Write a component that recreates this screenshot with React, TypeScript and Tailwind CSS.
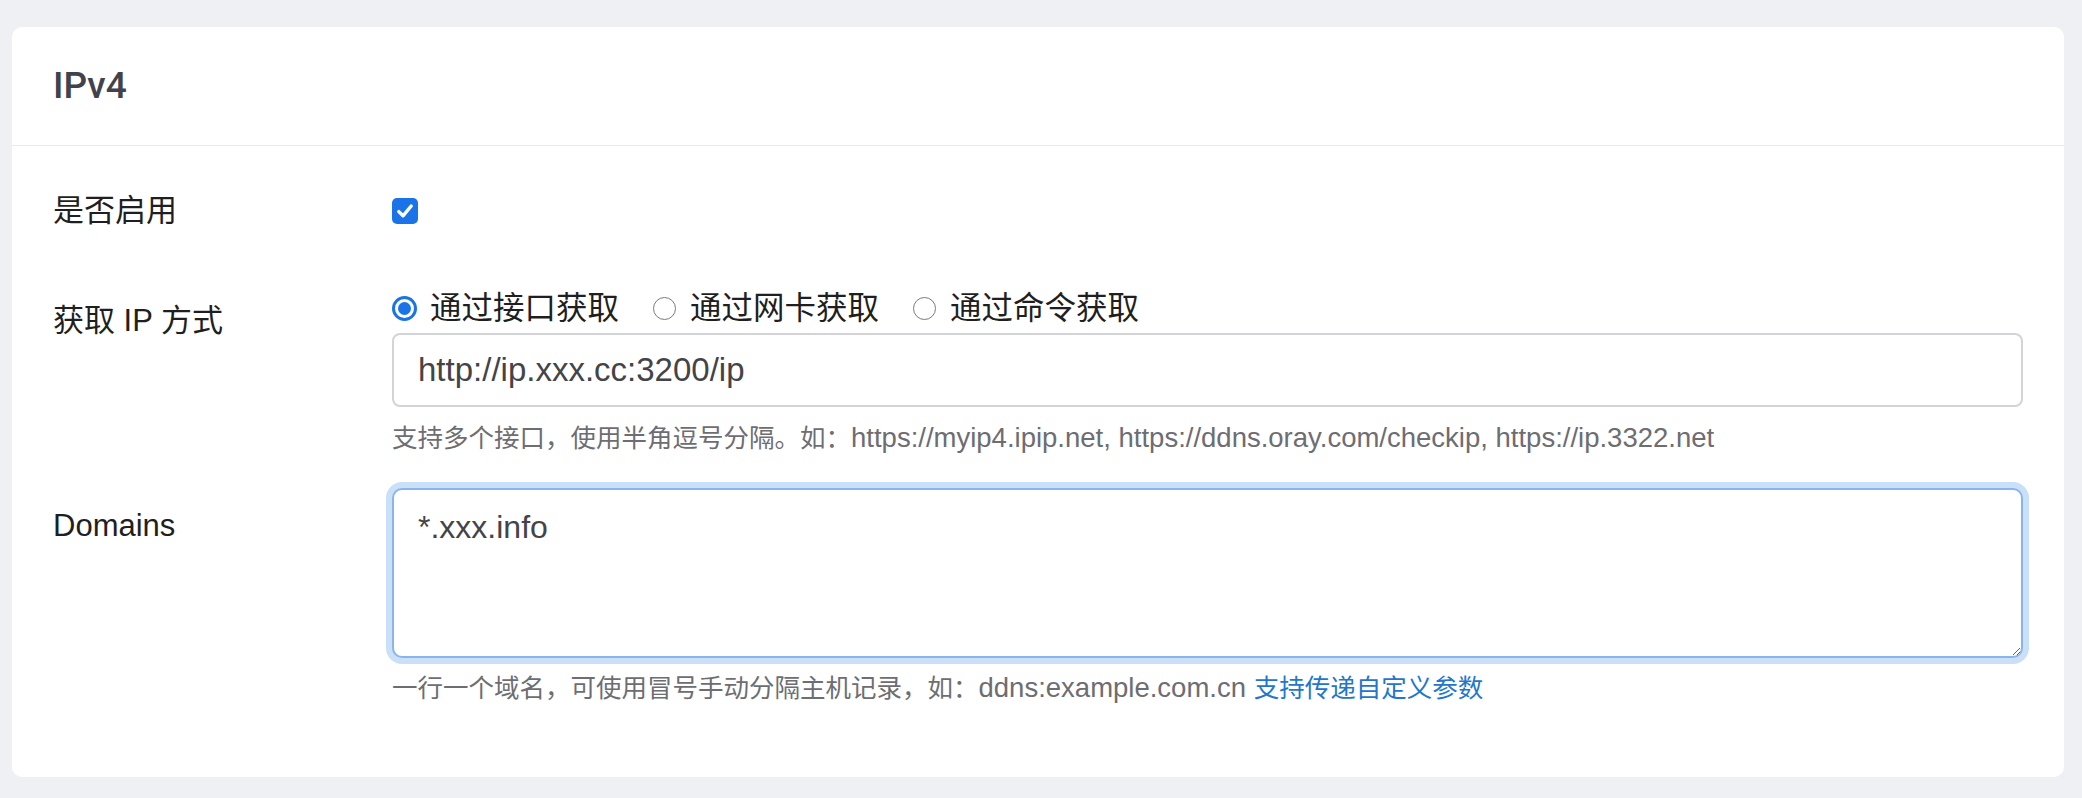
import React from "react";

function Checkbox() {
  return (
    <div className="w-[26px] h-[26px] rounded-[5px] bg-[#1b73e8] flex items-center justify-center">
      <svg width="26" height="26" viewBox="0 0 26 26" fill="none">
        <path d="M6.8 13.6 L11 17.8 L19.2 8" stroke="white" strokeWidth="3.4" strokeLinecap="round" strokeLinejoin="round" />
      </svg>
    </div>
  );
}

function Radio({ checked, label, last }: { checked?: boolean; label: string; last?: boolean }) {
  return (
    <div className={last ? "flex items-center" : "flex items-center mr-[33px]"}>
      <div className="w-[25px] h-[25px] flex items-center justify-center">
        {checked ? (
          <div className="w-[25px] h-[25px] rounded-full border-[3px] border-[#1b73e8] flex items-center justify-center">
            <div className="w-[13px] h-[13px] rounded-full bg-[#1b73e8]" />
          </div>
        ) : (
          <div className="w-[23px] h-[23px] rounded-full border-[1.5px] border-[#7a7a7a] bg-white" />
        )}
      </div>
      <span className="ml-[13px] text-[31.5px] leading-[46px] text-[#1f1f22]">{label}</span>
    </div>
  );
}

export default function App() {
  return (
    <div className="min-h-screen bg-[#eef0f4] pt-[27px] pl-[12px] pb-[21px] font-['Liberation_Sans','Noto_Sans_CJK_SC',sans-serif]">
      <div className="w-[2052px] bg-white rounded-[10px]">
        <div className="h-[119px] border-b border-[#e8e9ed] px-[41px] flex items-center font-['Roboto','Liberation_Sans',sans-serif] font-medium text-[37px] text-[#42424c]">
          IPv4
        </div>
        <div className="px-[41px] pt-[42px] pb-[70px]">
          {/* Row 1 */}
          <div className="flex mb-[51px]">
            <div className="w-[339px] shrink-0 text-[31px] leading-[46px] text-[#1f1f22]">是否启用</div>
            <div className="flex-1 h-[46px] flex items-center">
              <Checkbox />
            </div>
          </div>

          {/* Row 2 */}
          <div className="flex mb-[31px]">
            <div className="w-[339px] shrink-0 pt-[13px] text-[31px] leading-[46px] text-[#1f1f22]">获取 IP 方式</div>
            <div className="flex-1">
              <div className="flex items-center h-[46px] mb-[2px]">
                <Radio checked label="通过接口获取" />
                <Radio label="通过网卡获取" />
                <Radio label="通过命令获取" last />
              </div>
              <input
                type="text"
                defaultValue="http://ip.xxx.cc:3200/ip"
                className="w-full h-[74px] rounded-[8px] border-2 border-[#d3d4d7] bg-white px-[24px] text-[33px] leading-[48px] text-[#444448] outline-none"
              />
              <div className="mt-[11px] h-[39px] leading-[39px] text-[#6d6d72] whitespace-nowrap">
                <span className="text-[25.5px]">支持多个接口，使用半角逗号分隔。如：</span>
                <span className="text-[27.5px]">https://myip4.ipip.net, https://ddns.oray.com/checkip, https://ip.3322.net</span>
              </div>
            </div>
          </div>

          {/* Row 3 */}
          <div className="flex">
            <div className="w-[339px] shrink-0 pt-[15px] text-[31px] leading-[46px] text-[#1f1f22]">Domains</div>
            <div className="flex-1">
              <textarea
                defaultValue="*.xxx.info"
                className="block w-full h-[170px] rounded-[10px] border-2 border-[#88b6ea] bg-white px-[24px] pt-[13px] text-[32px] leading-[48px] text-[#444448] outline-none shadow-[0_0_0_6px_#cadff8]"
              />
              <div className="mt-[10px] h-[39px] leading-[39px] text-[#6d6d72] whitespace-nowrap">
                <span className="text-[25.5px]">一行一个域名，可使用冒号手动分隔主机记录，如：</span>
                <span className="text-[27.5px]">ddns:example.com.cn </span>
                <span className="text-[25.5px] text-[#2277cc]">支持传递自定义参数</span>
              </div>
            </div>
          </div>
        </div>
      </div>
    </div>
  );
}
